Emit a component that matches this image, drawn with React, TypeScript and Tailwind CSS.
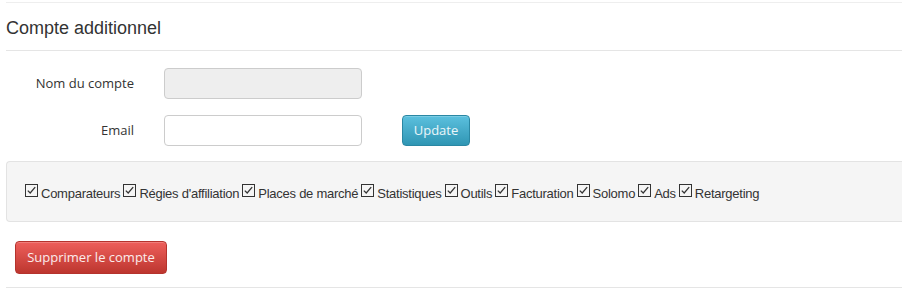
const modules = [
  'Comparateurs',
  "Régies d'affiliation",
  'Places de marché',
  'Statistiques',
  'Outils',
  'Facturation',
  'Solomo',
  'Ads',
  'Retargeting',
];

function CheckGlyph() {
  return (
    <svg width="13" height="13" viewBox="0 0 13 13" className="mr-[3px] shrink-0 relative top-[-3px]">
      <rect x="0.5" y="0.5" width="12" height="12" fill="none" stroke="#333" strokeWidth="1" />
      <path d="M2.8 6.6 L5.2 9 L10.2 3.2" fill="none" stroke="#333" strokeWidth="1.3" />
    </svg>
  );
}

export default function App() {
  return (
    <div className="w-[902px] h-[289px] bg-white pl-[6px] pt-[2px] text-[#333] font-['Liberation_Sans',Arial,sans-serif]">
      <div className="border-t border-[#eee]" />

      {/* header */}
      <div className="h-[48px] flex items-end pb-[13px] border-b border-[#e5e5e5]">
        <h2 className="text-[18px] leading-none text-[#333]">Compte additionnel</h2>
      </div>

      {/* form */}
      <div className="pt-[17px] font-['Open_Sans',sans-serif] text-[13px]">
        <div className="flex items-center h-[31px]">
          <label className="w-[128px] text-right text-[#333]">Nom du compte</label>
          <input
            disabled
            className="ml-[30px] w-[198px] h-[31px] bg-[#eee] border border-[#ccc] rounded-[4px]"
          />
        </div>
        <div className="flex items-center h-[31px] mt-[16px]">
          <label className="w-[128px] text-right text-[#333]">Email</label>
          <input className="ml-[30px] w-[198px] h-[31px] bg-white border border-[#ccc] rounded-[4px]" />
          <button className="ml-[40px] w-[68px] h-[31px] rounded-[4px] text-white/90 text-[13px] bg-gradient-to-b from-[#5bc0de] to-[#2f96b4] border border-[#2a87a3] shadow-[inset_0_1px_0_rgba(255,255,255,0.2)]">
            Update
          </button>
        </div>
      </div>

      {/* well */}
      <div className="mt-[15px] h-[61px] bg-[#f5f5f5] border border-[#e3e3e3] rounded-l-[4px] border-r-0 flex items-center pl-[18px] pt-[4px] text-[13px] tracking-[-0.25px]">
        {modules.map((m) => (
          <span key={m} className="flex items-center mr-[3px]">
            <CheckGlyph />
            <span>{m}</span>
          </span>
        ))}
      </div>

      {/* delete */}
      <div className="pt-[19px] pl-[9px] h-[66px] border-b border-[#e5e5e5]">
        <button className="w-[152px] h-[33px] rounded-[4px] text-white/90 font-['Open_Sans',sans-serif] text-[13px] bg-gradient-to-b from-[#ee5f5b] to-[#bd362f] border border-[#b5332d] shadow-[inset_0_1px_0_rgba(255,255,255,0.2)]">
          Supprimer le compte
        </button>
      </div>
    </div>
  );
}
